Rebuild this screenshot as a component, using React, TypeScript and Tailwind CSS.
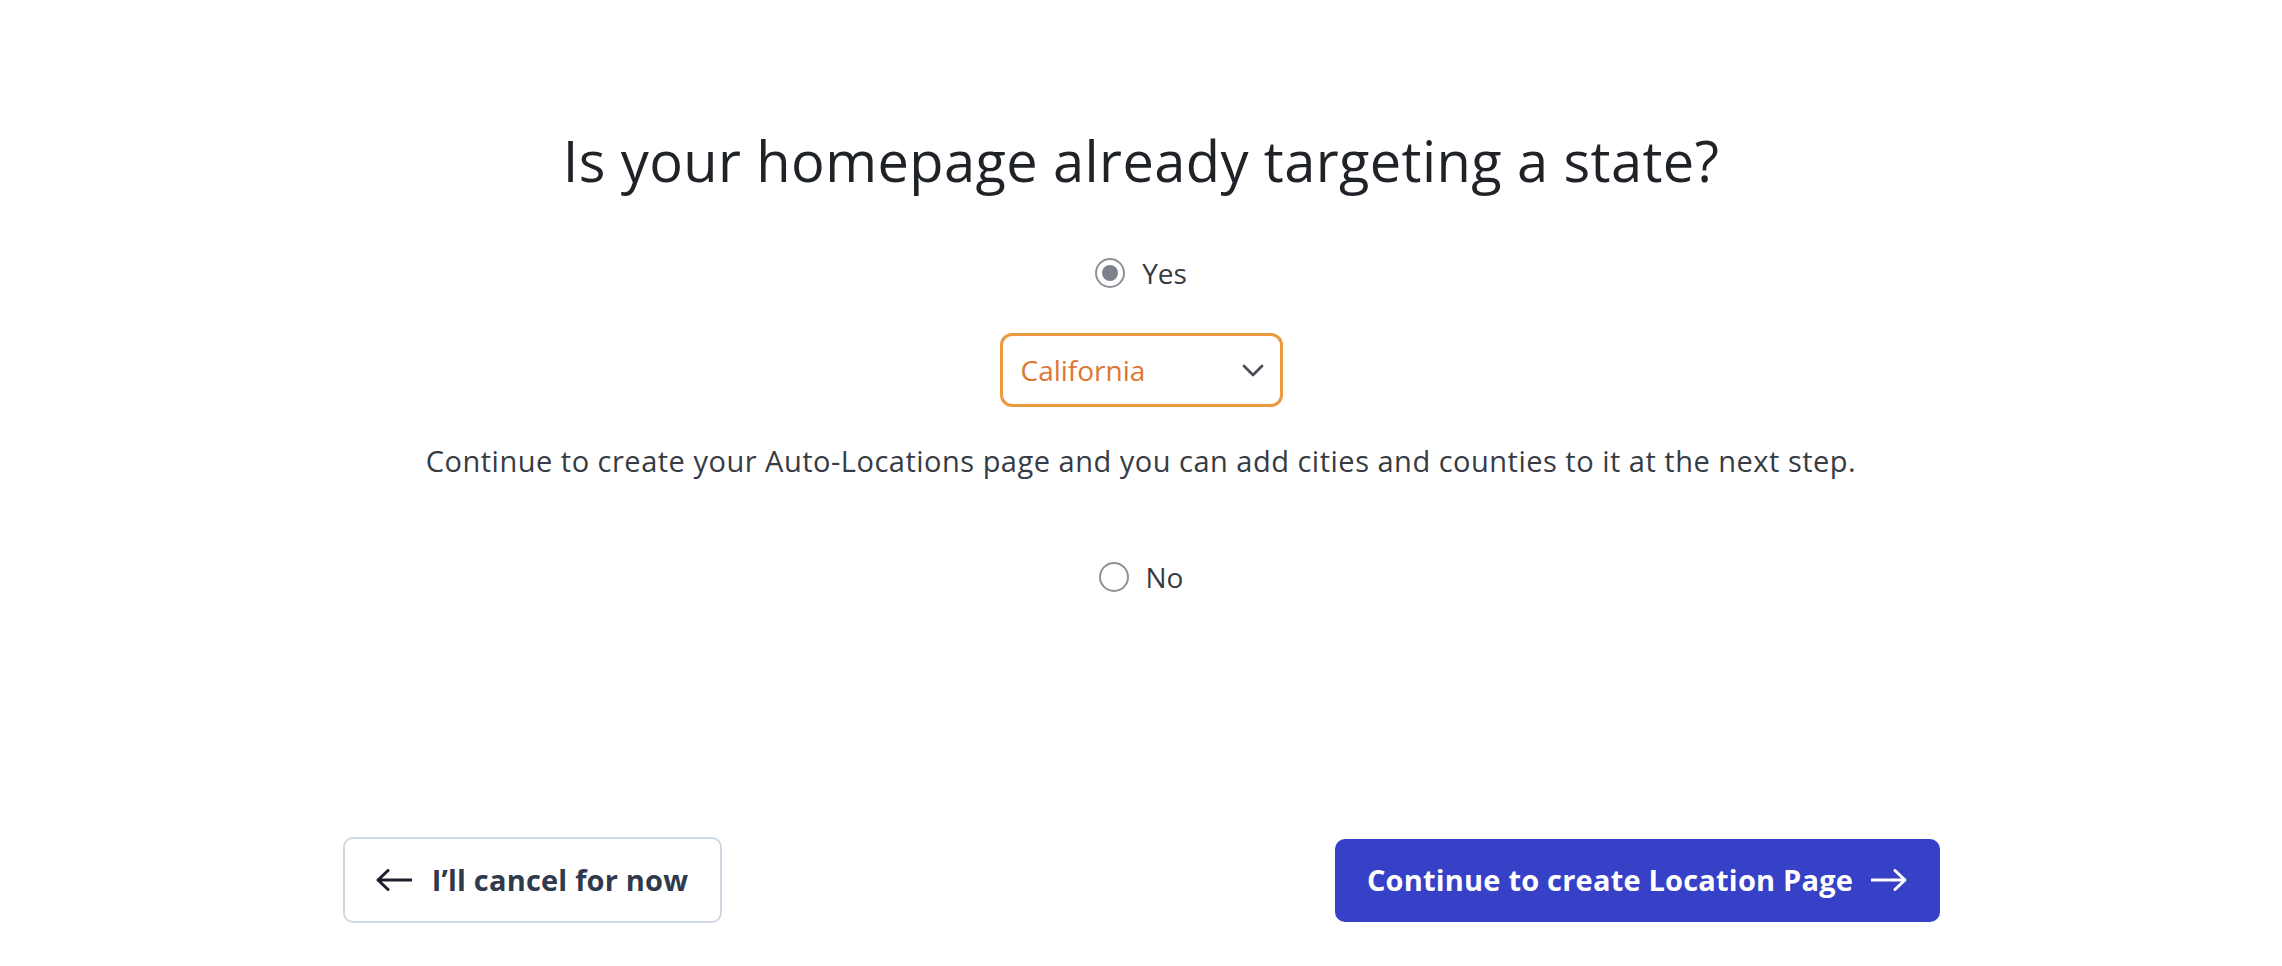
import { useState } from "react";

const font = { fontFamily: "'Open Sans', Lato, sans-serif" };

function Radio({ checked }: { checked: boolean }) {
    return (
        <span className="w-[30px] h-[30px] rounded-full border-2 border-[#8e9197] bg-white flex items-center justify-center shrink-0">
            {checked && <span className="w-[16px] h-[16px] rounded-full bg-[#7d828c]" />}
        </span>
    );
}

export default function App() {
    const [choice, setChoice] = useState<"yes" | "no">("yes");

    return (
        <div className="h-screen bg-white flex flex-col" style={font}>
            <main className="flex flex-col items-center pt-[125px]">
                <h1 className="text-[56px] leading-[70px] text-[#1f2328] font-normal tracking-[0.4px]">
                    Is your homepage already targeting a state?
                </h1>

                <label className="mt-[58px] flex items-center gap-[17px] cursor-pointer" onClick={() => setChoice("yes")}>
                    <Radio checked={choice === "yes"} />
                    <span className="text-[28px] leading-[40px] text-[#363b44]">Yes</span>
                </label>

                <button className="mt-[40px] w-[283px] h-[74px] rounded-[12px] border-[3px] border-[#ec9a40] bg-white flex items-center justify-between pl-[18px] pr-[16px]">
                    <span className="text-[28px] text-[#dd7632]">California</span>
                    <svg width="22" height="13" viewBox="0 0 22 13" fill="none">
                        <path d="M2 2L11 11L20 2" stroke="#4b4f55" strokeWidth="2.8" strokeLinecap="round" strokeLinejoin="round" />
                    </svg>
                </button>

                <p className="mt-[34px] text-[29px] leading-[40px] text-[#363b44] tracking-[0.5px]">
                    Continue to create your Auto-Locations page and you can add cities and counties to it at the next step.
                </p>

                <label className="mt-[76px] flex items-center gap-[17px] cursor-pointer" onClick={() => setChoice("no")}>
                    <Radio checked={choice === "no"} />
                    <span className="text-[28px] leading-[40px] text-[#363b44]">No</span>
                </label>
            </main>

            <footer className="mt-auto pb-[43px] w-[1597px] mx-auto flex items-center justify-between">
                <button className="w-[379px] h-[86px] rounded-[10px] border-2 border-[#cfd8e3] bg-white flex items-center justify-center gap-[20px]">
                    <svg width="36" height="22" viewBox="0 0 36 22" fill="none">
                        <path d="M35 11H2.5M12 1.5L2 11L12 20.5" stroke="#1a1f2b" strokeWidth="3" strokeLinecap="round" strokeLinejoin="round" />
                    </svg>
                    <span className="text-[29px] font-bold text-[#2f3a4d] tracking-[0.2px]">I’ll cancel for now</span>
                </button>

                <button className="w-[605px] h-[83px] rounded-[10px] bg-[#3641c7] flex items-center justify-center gap-[18px]">
                    <span className="text-[29px] font-bold text-white tracking-[0.2px]">Continue to create Location Page</span>
                    <svg width="36" height="22" viewBox="0 0 36 22" fill="none">
                        <path d="M1 11H33.5M24 1.5L34 11L24 20.5" stroke="#ffffff" strokeWidth="3" strokeLinecap="round" strokeLinejoin="round" />
                    </svg>
                </button>
            </footer>
        </div>
    );
}
